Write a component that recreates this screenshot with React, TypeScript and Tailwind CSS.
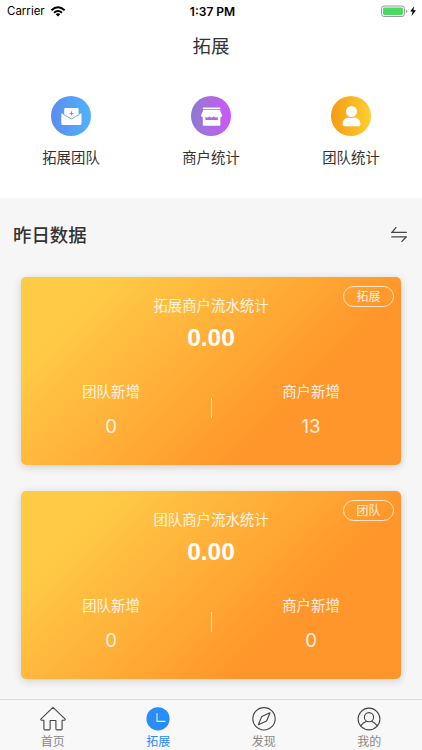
import React from 'react';

const SHORTCUTS = [
  { label: '拓展团队', bg: 'from-[#5b8df2] to-[#4fb2fb]', icon: 'mail' },
  { label: '商户统计', bg: 'from-[#8d79d0] to-[#cb55f6]', icon: 'shop' },
  { label: '团队统计', bg: 'from-[#f59a12] to-[#fcd02f]', icon: 'user' },
];

const CARDS = [
  { tag: '拓展', title: '拓展商户流水统计', amount: '0.00', teams: '0', merchants: '13' },
  { tag: '团队', title: '团队商户流水统计', amount: '0.00', teams: '0', merchants: '0' },
];

const TABS = [
  { label: '首页', icon: 'home' },
  { label: '拓展', icon: 'clock' },
  { label: '发现', icon: 'compass' },
  { label: '我的', icon: 'me' },
];

const ShortcutIcon: React.FC<{ name: string }> = ({ name }) => (
  <svg viewBox="0 0 40 40" className="w-10 h-10" fill="white">
    {name === 'mail' && (
      <>
        <path d="M13.2 13a1 1 0 0 1 1-1h12.400a1 1 0 0 1 1 1v6.200l-7.200 4-7.200-4z" />
        <path d="M10.300 18.100q0-1 1-.5l9.100 5.400 9.100-5.400q1-.5 1 .5v9.400a1.500 1.500 0 0 1-1.500 1.500H11.800a1.500 1.500 0 0 1-1.500-1.500z" />
        <path d="M20.500 15.400v4M18.500 17.400h4" stroke="#5799f4" strokeWidth="1" />
        <path d="M12.500 18.500l7.900 4.500 7.900-4.500" stroke="#569cf5" strokeWidth=".8" fill="none" />
      </>
    )}
    {name === 'shop' && (
      <>
        <rect x="11.800" y="11.600" width="17.600" height="1.600" rx=".6" />
        <path d="M12.300 14.100h16.600l2.300 5.400q0 1.800-2 1.800-1.300 0-2-1-.9 1.200-2.200 1.200t-2.200-1.200q-.9 1.200-2.200 1.200t-2.200-1.200q-.9 1.200-2.200 1.200t-2.200-1.200q-.7 1-2 1-2 0-2-1.800z" />
        <path d="M11.800 20h2.600v4h12.400v-4h2.600v9a.8.800 0 0 1-.8.800H12.600a.8.800 0 0 1-.8-.8z" />
      </>
    )}
    {name === 'user' && (
      <>
        <circle cx="20.500" cy="15.500" r="5.500" />
        <path d="M11.500 28.300c0-4.800 3.600-6.800 6-6.800q3 1.100 6 0c2.400 0 6 2 6 6.800q0 1.900-1.900 1.900H13.400q-1.900 0-1.900-1.900z" />
      </>
    )}
  </svg>
);

const TabIcon: React.FC<{ name: string }> = ({ name }) => (
  <svg viewBox="0 0 26 26" className="w-[26px] h-[26px]" fill="none" stroke="#444" strokeWidth="1.1" strokeLinejoin="round" strokeLinecap="round">
    {name === 'home' && (
      <path d="M13 1.400L.8 13.200q-.2 1 .8 1h2.300v8.600q0 1.100 1.100 1.100h4q1.100 0 1.100-1.100v-8.300h5.800v8.300q0 1.100 1.100 1.100h4q1.100 0 1.100-1.100v-8.600h2.300q1 0 .8-1z" />
    )}
    {name === 'clock' && (
      <>
        <circle cx="13" cy="12.800" r="11.600" fill="#268dfb" stroke="none" />
        <path d="M12 7v8.400h8.500" stroke="#e6f3ff" strokeLinecap="butt" />
      </>
    )}
    {name === 'compass' && (
      <>
        <circle cx="13" cy="12.800" r="11.200" />
        <path d="M19 6.800l-3.400 8.200-8.200 3.700L10.800 10.400z" />
      </>
    )}
    {name === 'me' && (
      <>
        <circle cx="13" cy="13" r="10.900" />
        <circle cx="13" cy="11.200" r="4.600" />
        <path d="M4.600 19.800q2.700-3.300 5.800-4.500M21.400 19.800q-2.700-3.300-5.800-4.500" />
      </>
    )}
  </svg>
);

const StatusBar: React.FC = () => (
  <div className="h-[23px] pl-[7px] pr-1 grid grid-cols-3 items-center text-black">
    <div className="flex items-center gap-[5px] text-[11.5px]">
      <span>Carrier</span>
      <svg viewBox="0 0 16 12" className="w-4 h-3" fill="none" stroke="black" strokeWidth="2">
        <path d="M1.400 4.200Q8-1.800 14.600 4.200M4 6.800q4-3.500 8 0" />
        <path d="M8 10.500l-2.300-2.300q2.300-1.800 4.600 0z" fill="black" stroke="none" />
      </svg>
    </div>
    <div className="text-center text-[12px] font-semibold">1:37 PM</div>
    <div className="flex items-center justify-end">
      <svg viewBox="0 0 37 14" className="w-[37px] h-[14px]">
        <rect x=".5" y="1" width="23" height="10.500" rx="2.600" fill="white" stroke="#999" />
        <rect x="2" y="2.500" width="20" height="7.500" rx="1.400" fill="#4bd964" />
        <path d="M25 4.500v3.500q1.300-.6 1.300-1.750T25 4.500z" fill="#999" />
        <path d="M33.200 1.200l-4 5.400h2.400l-1.100 4.400 4.500-5.700h-2.600z" fill="black" />
      </svg>
    </div>
  </div>
);

const Stat: React.FC<{ label: string; value: string }> = ({ label, value }) => (
  <div className="flex-1 text-center">
    <div className="text-[14.4px] leading-5">{label}</div>
    <div className="mt-3 text-[18.5px] leading-6">{value}</div>
  </div>
);

const StatCard: React.FC<(typeof CARDS)[number]> = ({ tag, title, amount, teams, merchants }) => (
  <div className="relative h-[188px] rounded-[5px] text-white/85 bg-[linear-gradient(135deg,#ffca46_16%,#ff962b_70%)] shadow-[0_2px_8px_rgba(0,0,0,0.16)]">
    <span className="absolute top-[9px] right-[7px] w-[51px] h-[21px] rounded-full border border-white/75 flex items-center justify-center text-[12px]">{tag}</span>
    <div className="pt-[19px] text-center text-[14.4px] leading-5">{title}</div>
    <div className="mt-2 text-center font-bold text-[24.5px] leading-7 font-['Liberation_Sans'] text-white">{amount}</div>
    <div className="mt-[30px] flex items-start">
      <Stat label="团队新增" value={teams} />
      <div className="w-px h-5 mx-[9.500px] mt-4 bg-white/75"></div>
      <Stat label="商户新增" value={merchants} />
    </div>
  </div>
);

const App: React.FC = () => {
  return (
    <div className="w-[422px] h-[750px] overflow-hidden flex flex-col bg-[#f6f6f6] text-[#333] font-['Inter','Noto_Sans_CJK_SC',sans-serif]">
      <header className="bg-white h-[198px] shrink-0">
        <StatusBar />
        <h1 className="h-12 flex items-center justify-center text-[18.500px]">拓展</h1>
        <nav className="mt-[25px] mx-auto w-[420px] grid grid-cols-3">
          {SHORTCUTS.map((s) => (
            <div key={s.label} className="flex flex-col items-center">
              <div className={`w-10 h-10 rounded-full bg-gradient-to-r ${s.bg}`}>
                <ShortcutIcon name={s.icon} />
              </div>
              <span className="mt-3 text-[14.4px] leading-5">{s.label}</span>
            </div>
          ))}
        </nav>
      </header>

      <main className="flex-1 min-h-0">
        <div className="h-[79px] pt-[23px] pl-[13px] pr-[15px] flex justify-between">
          <h2 className="text-[18.4px] leading-[28px] font-medium">昨日数据</h2>
          <svg viewBox="0 0 16 16" className="w-4 h-4 mt-[6px]" fill="none" stroke="#444" strokeWidth="1.300">
            <path d="M5.300 .2L1 5.300h14.800M.3 9.900h14.800l-4.600 5" />
          </svg>
        </div>
        <div className="px-[21px] flex flex-col gap-[26px]">
          {CARDS.map((card) => (
            <StatCard key={card.tag} {...card} />
          ))}
        </div>
      </main>

      <footer className="h-[51px] shrink-0 border-t border-[#d9dbdb] bg-[#f8f8f8] grid grid-cols-4 text-[12px] text-[#888]">
        {TABS.map((tab) => (
          <div key={tab.label} className={`flex flex-col items-center pt-[6px] ${tab.icon === 'clock' ? 'text-[#268dfb]' : ''}`}>
            <TabIcon name={tab.icon} />
            <span className="leading-4 mt-0.5">{tab.label}</span>
          </div>
        ))}
      </footer>
    </div>
  );
};

export default App;
